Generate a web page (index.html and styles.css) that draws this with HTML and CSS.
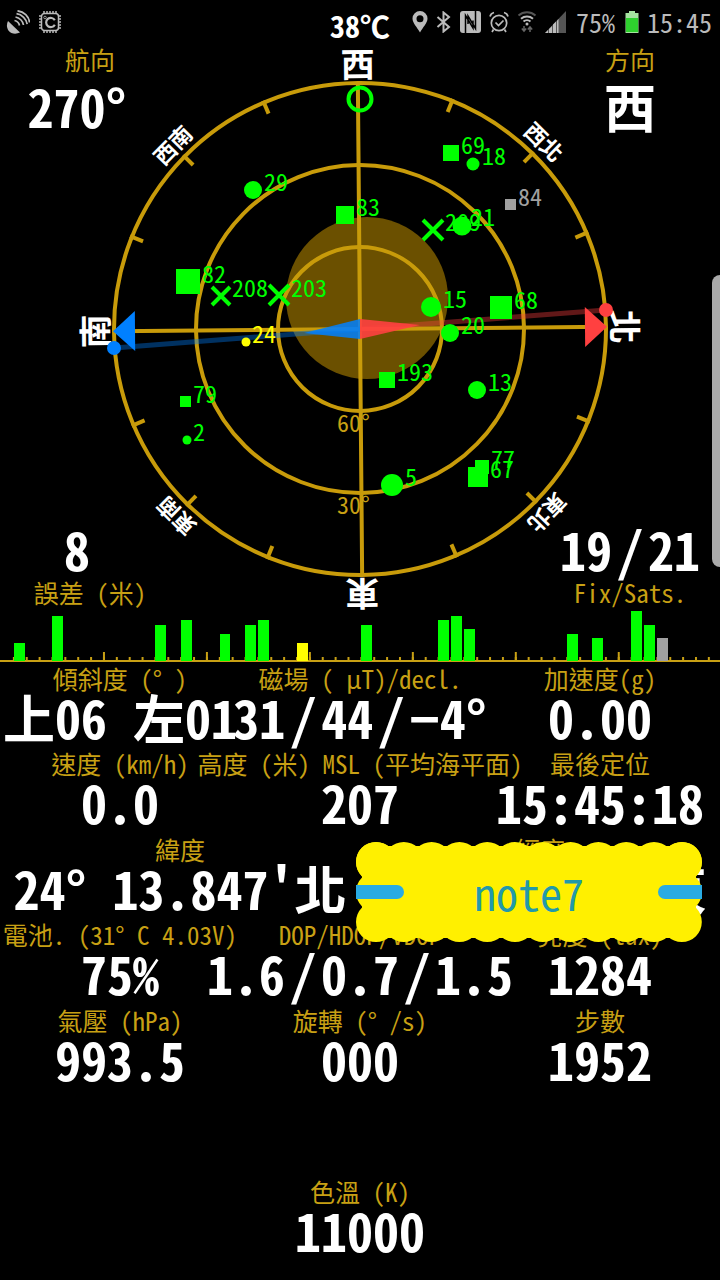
FILE: index.html
```
<!DOCTYPE html>
<html lang="zh-Hant">
<head>
    <meta charset="UTF-8">
    <meta name="viewport" content="width=device-width, initial-scale=1.0">
    <title>GPS Status</title>
    <link rel="stylesheet" href="styles.css">
</head>
<body>
    <header class="status-bar">
        <div class="status-group">
            <svg class="icon" width="24" height="24" viewBox="0 0 24 24">
                <path d="M2 11L14 22.500C10 24.500 5 24 2.500 20.500 .5 17.500 .5 14 2 11z" fill="#bbb"/>
                <path d="M8.500 10.500c2.500.5 4.500 2.500 5 5M9.500 7c4 .7 7.500 4 8 8M10.500 3.700c5.500.8 10 5.300 10.700 10.500M11.500 .8C18 1.500 23 6.500 23.500 12.500" fill="none" stroke="#bbb" stroke-width="1.700"/>
            </svg>
            <svg class="icon" width="24" height="24" viewBox="0 0 24 24">
                <rect x="3.500" y="3.500" width="17" height="17" rx="3" fill="none" stroke="#bbb" stroke-width="1.500"/>
                <path d="M6 1v2M9 1v2M12 1v2M15 1v2M18 1v2M6 21v2M9 21v2M12 21v2M15 21v2M18 21v2M1 6h2M1 9h2M1 12h2M1 15h2M1 18h2M21 6h2M21 9h2M21 12h2M21 15h2M21 18h2" stroke="#bbb" stroke-width="1.500"/>
                <circle cx="7" cy="7.500" r="1.300" fill="none" stroke="#999"/>
                <path d="M16.800 10.300a4.600 4.600 0 1 0 0 4.400" fill="none" stroke="#bbb" stroke-width="2.200"/>
            </svg>
        </div>
        <div class="temperature">38℃</div>
        <div class="status-group">
            <svg class="icon" width="16" height="22" viewBox="0 0 16 22">
                <path fill-rule="evenodd" d="M8 0a7.500 7.500 0 0 0-7.500 7.500C.5 12 5 16 8 21.500 11 16 15.500 12 15.500 7.500A7.500 7.500 0 0 0 8 0zM8 4.200a3.500 3.500 0 1 1 0 7 3.500 3.500 0 0 1 0-7z" fill="#bbb"/>
            </svg>
            <svg class="icon" width="16" height="22" viewBox="0 0 16 22">
                <path d="M1.500 6L13 16l-5.500 4.500v-19L13 6 1.500 16" fill="none" stroke="#bbb" stroke-width="2"/>
            </svg>
            <svg class="icon" width="21" height="22" viewBox="0 0 21 22">
                <rect width="21" height="22" rx="3" fill="#bbb"/>
                <path d="M5.500 22V4.500L13 17V9.500M15.500 0v17.500L8 5v8" fill="none" stroke="#000" stroke-width="1.500"/>
            </svg>
            <svg class="icon" width="20" height="22" viewBox="0 0 20 22">
                <circle cx="10" cy="12" r="7.700" fill="none" stroke="#bbb" stroke-width="1.700"/>
                <path d="M6.500 11.500l3 3 5-5M1 5.500C1.500 3.500 3 2 5 1.500M19 5.500c-.5-2-2-3.500-4-4M4.500 18.500L3 21M15.500 18.500L17 21" fill="none" stroke="#bbb" stroke-width="1.700"/>
            </svg>
            <svg class="icon" width="20" height="22" viewBox="0 0 20 22">
                <path d="M1.500 4.500c5-4.300 12-4.300 17 0" fill="none" stroke="#555" stroke-width="2"/>
                <path d="M4 7.700c3.500-3 8.500-3 12 0M6.500 10.500c2-1.800 5-1.800 7 0" fill="none" stroke="#bbb" stroke-width="2"/>
                <circle cx="10" cy="13" r="1.500" fill="#bbb"/>
                <path d="M7 15v5M4.800 17.500L7 20l2.200-2.500M13 21v-5M10.800 18.500L13 16l2.200 2.500" fill="none" stroke="#666" stroke-width="1.500"/>
            </svg>
            <svg class="icon" width="21" height="22" viewBox="0 0 21 22">
                <path d="M0 22L21 0v22z" fill="#555"/>
                <path d="M0 22l3-3v3zM4 18l3-3v7H4zM8 13.600l3-3.100V22H8z" fill="#bbb"/>
                <path d="M12 9.400l1.500-1.500V22H12z" fill="#bbb"/>
            </svg>
            <span class="status-text percent">75%</span>
            <svg class="icon" width="14" height="22" viewBox="0 0 14 22">
                <path d="M4 0h6v2h3.500v20H.5V2H4z" fill="#a5e3a0"/>
                <rect x="1" y="7" width="12" height="14" fill="#2ed12e"/>
            </svg>
            <span class="status-text">15:45</span>
        </div>
    </header>

    <main>
        <section class="sky">
            <svg class="sky-view" viewBox="0 43 720 567">
                <circle cx="367" cy="298" r="81" fill="#6b5000"/>

                <!-- compass rose -->
                <g transform="rotate(-0.5 360 329)">
                    <g class="grid-line">
                        <circle cx="360" cy="329" r="246"/>
                        <circle cx="360" cy="329" r="164"/>
                        <circle cx="360" cy="329" r="82"/>
                        <path d="M360 83v492M114 329h492"/>
                        <path d="M360 81v14" transform="rotate(22.5 360 329)"/>
                        <path d="M360 81v14" transform="rotate(45 360 329)"/>
                        <path d="M360 81v14" transform="rotate(67.5 360 329)"/>
                        <path d="M360 81v14" transform="rotate(112.5 360 329)"/>
                        <path d="M360 81v14" transform="rotate(135 360 329)"/>
                        <path d="M360 81v14" transform="rotate(157.5 360 329)"/>
                        <path d="M360 81v14" transform="rotate(202.5 360 329)"/>
                        <path d="M360 81v14" transform="rotate(225 360 329)"/>
                        <path d="M360 81v14" transform="rotate(247.5 360 329)"/>
                        <path d="M360 81v14" transform="rotate(292.5 360 329)"/>
                        <path d="M360 81v14" transform="rotate(315 360 329)"/>
                        <path d="M360 81v14" transform="rotate(337.5 360 329)"/>
                    </g>
                    <g class="cardinal">
                        <text x="360" y="77">西</text>
                        <text x="360" y="77" transform="rotate(90 360 329)">北</text>
                        <text x="360" y="77" transform="rotate(180 360 329)">東</text>
                        <text x="360" y="77" transform="rotate(270 360 329)">南</text>
                    </g>
                    <g class="ordinal">
                        <text x="360" y="75" transform="rotate(45 360 329)">西北</text>
                        <text x="360" y="75" transform="rotate(135 360 329)">東北</text>
                        <text x="360" y="75" transform="rotate(225 360 329)">東南</text>
                        <text x="360" y="75" transform="rotate(315 360 329)">西南</text>
                    </g>
                    <path d="M585 309l22 20-22 20z" fill="#ff4040"/>
                    <path d="M135 309l-22 20 22 20z" fill="#0080ff"/>
                </g>
                <g class="elevation">
                    <text x="337" y="432">60°</text>
                    <text x="337" y="514">30°</text>
                </g>

                <!-- needle -->
                <path d="M360 329L606 310" stroke="#ff4040" stroke-width="5" opacity=".38"/>
                <path d="M360 329L114 348" stroke="#0080ff" stroke-width="5" opacity=".38"/>
                <path d="M360 319l60 6-60 14z" fill="#ff4040" opacity=".9"/>
                <path d="M360 319l-56 14 56 6z" fill="#0080ff" opacity=".85"/>
                <circle cx="606" cy="310" r="7" fill="#ff4040"/>
                <circle cx="114" cy="348" r="7" fill="#0080ff"/>
                <circle cx="360" cy="99" r="11.500" fill="none" stroke="#0f0" stroke-width="4"/>

                <!-- satellites -->
                <g class="sat">
                    <rect x="443" y="145" width="16" height="16"/><text x="461" y="154">69</text>
                    <circle cx="473" cy="164" r="6.500"/><text x="482" y="165">18</text>
                    <circle cx="253" cy="190" r="9"/><text x="264" y="191">29</text>
                    <rect x="336" y="206" width="18" height="18"/><text x="356" y="216">83</text>
                    <path d="M423 220l20 20m0-20l-20 20"/><text x="445" y="231">209</text>
                    <circle cx="462" cy="226" r="9.500"/><text x="471" y="226">21</text>
                    <rect x="176" y="269" width="24" height="25"/><text x="202" y="283">82</text>
                    <path d="M212 287l18 18m0-18l-18 18"/><text x="232" y="297">208</text>
                    <path d="M269 285l20 20m0-20l-20 20"/><text x="291" y="297">203</text>
                    <circle cx="431" cy="307" r="10"/><text x="443" y="308">15</text>
                    <rect x="490" y="296" width="22" height="23"/><text x="514" y="309">68</text>
                    <circle cx="450" cy="333" r="9"/><text x="461" y="334">20</text>
                    <rect x="180" y="396" width="11" height="11"/><text x="193" y="403">79</text>
                    <circle cx="187" cy="440" r="4.500"/><text x="193" y="441">2</text>
                    <rect x="379" y="372" width="16" height="16"/><text x="397" y="381">193</text>
                    <circle cx="477" cy="390" r="9"/><text x="488" y="391">13</text>
                    <rect x="475" y="460" width="14" height="14"/><text x="491" y="468">77</text>
                    <rect x="468" y="467" width="20" height="20"/><text x="490" y="478">67</text>
                    <circle cx="392" cy="485" r="11"/><text x="405" y="486">5</text>
                </g>
                <g class="sat weak">
                    <circle cx="246" cy="342" r="4.500"/><text x="252" y="343">24</text>
                </g>
                <g class="sat unused">
                    <rect x="505" y="199" width="11" height="11"/><text x="518" y="206">84</text>
                </g>
            </svg>
            <div class="corner top left">
                <div class="label">航向</div>
                <div class="value">270°&nbsp;</div>
            </div>
            <div class="corner top right">
                <div class="label">方向</div>
                <div class="value">西</div>
            </div>
            <div class="corner bottom left">
                <div class="value">8&nbsp;</div>
                <div class="label">誤差 (米)</div>
            </div>
            <div class="corner bottom right">
                <div class="value">19<span class="slash">/</span>21</div>
                <div class="label">Fix/Sats.</div>
            </div>
            <div class="scrollbar"></div>
        </section>

        <svg class="signal" viewBox="0 610 720 54">
            <defs>
                <pattern id="minor" x="0" y="657" width="12.87" height="5" patternUnits="userSpaceOnUse">
                    <rect width="2" height="5" fill="#c8a014"/>
                </pattern>
                <pattern id="major" x="0" y="652" width="102.96" height="10" patternUnits="userSpaceOnUse">
                    <rect width="2" height="10" fill="#c8a014"/>
                </pattern>
            </defs>
            <rect x="3" y="657" width="717" height="5" fill="url(#minor)"/>
            <rect x="3" y="652" width="717" height="10" fill="url(#major)"/>
            <path d="M0 661h720" stroke="#c8a014" stroke-width="2"/>
            <path fill="#0f0" d="M14 643h11v18h-11zM52 616h11v45h-11zM155 625h11v36h-11zM181 620h11v41h-11zM220 634h10v27h-10zM245 625h11v36h-11zM258 620h11v41h-11zM361 625h11v36h-11zM438 620h11v41h-11zM451 616h11v45h-11zM464 629h11v32h-11zM567 634h11v27h-11zM592 638h11v23h-11zM631 611h11v50h-11zM644 625h11v36h-11z"/>
            <path fill="#ff0" d="M297 643h11v18h-11z"/>
            <path fill="#a0a0a0" d="M657 638h11v23h-11z"/>
        </svg>

        <section class="readings">
            <div class="row">
                <div class="cell">
                    <div class="label">傾斜度 (° )</div>
                    <div class="value">上06 左01</div>
                </div>
                <div class="cell">
                    <div class="label">磁場 ( μT)/decl.</div>
                    <div class="value">31<span class="slash">/</span>44<span class="slash">/</span>−4°</div>
                </div>
                <div class="cell">
                    <div class="label">加速度(g)</div>
                    <div class="value">0.00</div>
                </div>
            </div>
            <div class="row">
                <div class="cell">
                    <div class="label">速度 (km/h)</div>
                    <div class="value">0.0</div>
                </div>
                <div class="cell">
                    <div class="label">高度 (米) MSL (平均海平面)</div>
                    <div class="value">207</div>
                </div>
                <div class="cell">
                    <div class="label">最後定位</div>
                    <div class="value">15:45:18</div>
                </div>
            </div>
            <div class="row">
                <div class="cell">
                    <div class="label">緯度</div>
                    <div class="value">24° 13.847'北</div>
                </div>
                <div class="cell">
                    <div class="label">經度</div>
                    <div class="value">120° 41.52'東</div>
                </div>
            </div>
            <div class="row">
                <div class="cell">
                    <div class="label">電池. (31° C 4.03V)</div>
                    <div class="value">75%</div>
                </div>
                <div class="cell">
                    <div class="label">DOP/HDOP/VDOP</div>
                    <div class="value">1.6<span class="slash">/</span>0.7<span class="slash">/</span>1.5</div>
                </div>
                <div class="cell">
                    <div class="label">亮度 (lux)</div>
                    <div class="value">1284</div>
                </div>
            </div>
            <div class="row">
                <div class="cell">
                    <div class="label">氣壓 (hPa)</div>
                    <div class="value">993.5</div>
                </div>
                <div class="cell">
                    <div class="label">旋轉 (° /s)</div>
                    <div class="value">000</div>
                </div>
                <div class="cell">
                    <div class="label">步數</div>
                    <div class="value">1952</div>
                </div>
            </div>
            <div class="row"></div>
            <div class="row">
                <div class="cell">
                    <div class="label">色溫 (K)</div>
                    <div class="value">11000</div>
                </div>
            </div>

            <div class="note">
                <svg class="note-shape" viewBox="0 0 346 100">
                    <g fill="none" stroke="#fff000" stroke-width="40" stroke-linecap="round">
                        <path d="M20 20h306M20 80h306" stroke-dasharray="0 27.8"/>
                        <path d="M20 20v60M326 20v60" stroke-dasharray="0 30"/>
                    </g>
                    <rect x="6" y="4" width="334" height="92" rx="14" fill="#fff000"/>
                    <path d="M0 43h41a7 7 0 0 1 0 14H0zM346 43h-37a7 7 0 0 0 0 14h37z" fill="#29abe2"/>
                </svg>
                <span class="note-text">note7</span>
            </div>
        </section>
    </main>
</body>
</html>
```
FILE: styles.css
```
* {
    box-sizing: border-box;
}

body {
    margin: 0;
    min-height: 100vh;
    display: flex;
    flex-direction: column;
    background-color: #000;
    color: #fff;
    font-family: "Noto Sans Mono CJK TC", "Noto Sans CJK TC", monospace;
    font-feature-settings: "hwid";
    overflow-x: hidden;
}

main {
    flex: 1;
    display: flex;
    flex-direction: column;
}

svg {
    display: block;
}

/* status bar */
.status-bar {
    position: relative;
    display: flex;
    justify-content: space-between;
    align-items: center;
    height: 43px;
    padding: 0 8px 0 6px;
}

.status-group {
    display: flex;
    align-items: center;
    gap: 8px;
}

.icon {
    flex: none;
}

.status-text {
    font-size: 26px;
    line-height: 40px;
    color: #bbb;
}

.percent {
    width: 43px;
    text-align: center;
}

.temperature {
    position: absolute;
    top: 6px;
    left: 0;
    right: 0;
    text-align: center;
    font-size: 30px;
    line-height: 38px;
    font-weight: bold;
}

/* sky view */
.sky {
    position: relative;
}

.sky-view,
.signal {
    width: 100%;
}

.sky-view {
    overflow: visible;
}

.grid-line {
    fill: none;
    stroke: #c89b0a;
    stroke-width: 4px;
}

.cardinal,
.ordinal {
    fill: #fff;
    font-weight: bold;
    text-anchor: middle;
}

.cardinal {
    font-size: 34px;
}

.ordinal {
    font-size: 22px;
}

.elevation {
    fill: #c8a014;
    font-size: 24px;
}

.sat {
    fill: #0f0;
    font-size: 24px;
}

.sat path {
    stroke: #0f0;
    stroke-width: 4px;
}

.weak {
    fill: #ff0;
}

.unused {
    fill: #a0a0a0;
}

.corner {
    position: absolute;
    width: 25%;
    text-align: center;
}

.top {
    top: 2px;
}

.bottom {
    bottom: 2px;
}

.left {
    left: 0;
}

.right {
    right: 0;
}

.scrollbar {
    position: absolute;
    top: 232px;
    right: 0;
    width: 8px;
    height: 292px;
    border-radius: 8px 0 0 8px;
    background-color: #aaa;
}

/* readings */
.label {
    font-size: 25px;
    line-height: 28px;
    color: #c8a014;
    white-space: nowrap;
}

.value {
    font-size: 52px;
    line-height: 50px;
    font-weight: bold;
    white-space: nowrap;
}

.top .value {
    line-height: 66px;
}

.bottom .value {
    line-height: 54px;
}

.bottom .label {
    line-height: 32px;
}

.slash {
    margin: 0 5px;
}

.readings {
    position: relative;
    flex: 1;
    display: grid;
    grid-template-rows: repeat(7, 1fr);
    padding-bottom: 18px;
}

.row {
    display: flex;
}

.cell {
    flex: 1 1 0;
    min-width: 0;
    display: flex;
    flex-direction: column;
    align-items: center;
}

/* floating note */
.note {
    position: absolute;
    top: 178px;
    right: 18px;
    width: 346px;
    height: 100px;
    display: grid;
    place-items: center;
}

.note-shape,
.note-text {
    grid-area: 1 / 1;
}

.note-text {
    font-size: 44px;
    line-height: 50px;
    color: #2299aa;
}
```
